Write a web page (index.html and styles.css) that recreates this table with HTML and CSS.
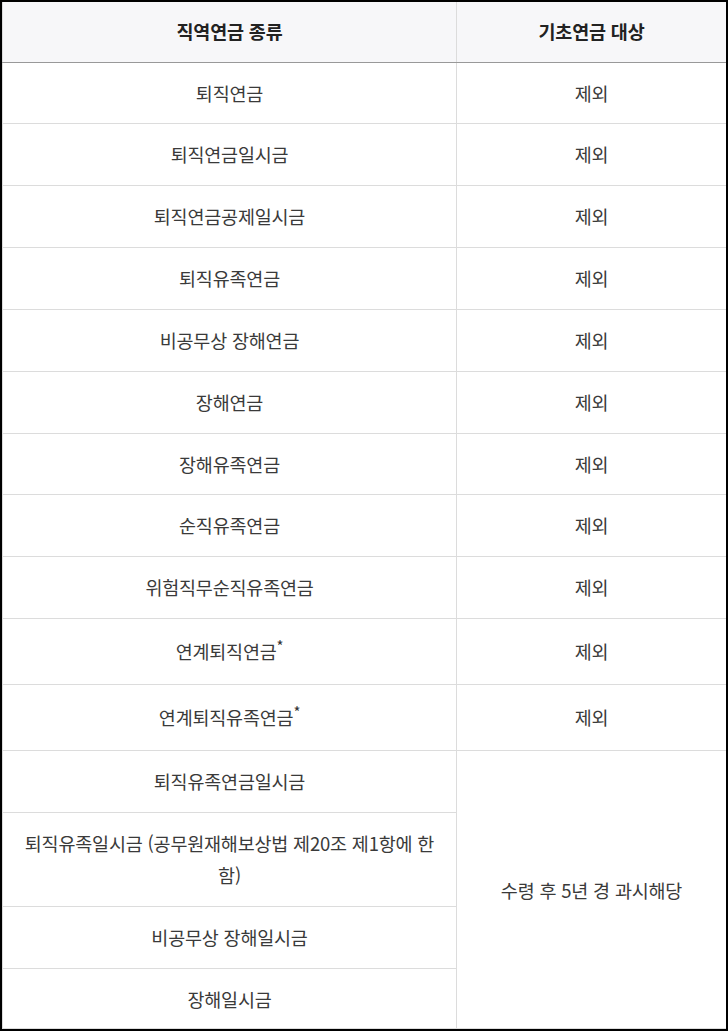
FILE: index.html
```html
<!DOCTYPE html>
<html lang="ko">
<head>
<meta charset="utf-8">
<title>직역연금 종류</title>
<link rel="stylesheet" href="styles.css">
</head>
<body>
<div class="frame">
  <div class="viewport">
    <table class="pension">
      <colgroup>
        <col class="col-kind">
        <col class="col-target">
      </colgroup>
      <thead>
        <tr>
          <th>직역연금 종류</th>
          <th>기초연금 대상</th>
        </tr>
      </thead>
      <tbody>
        <tr><td>퇴직연금</td><td>제외</td></tr>
        <tr><td>퇴직연금일시금</td><td>제외</td></tr>
        <tr><td>퇴직연금공제일시금</td><td>제외</td></tr>
        <tr><td>퇴직유족연금</td><td>제외</td></tr>
        <tr><td>비공무상 장해연금</td><td>제외</td></tr>
        <tr><td>장해연금</td><td>제외</td></tr>
        <tr><td>장해유족연금</td><td>제외</td></tr>
        <tr><td>순직유족연금</td><td>제외</td></tr>
        <tr><td>위험직무순직유족연금</td><td>제외</td></tr>
        <tr class="noted"><td>연계퇴직연금<sup class="mark">*</sup></td><td>제외</td></tr>
        <tr class="noted"><td>연계퇴직유족연금<sup class="mark">*</sup></td><td>제외</td></tr>
        <tr><td>퇴직유족연금일시금</td><td rowspan="4">수령 후 5년 경 과시해당</td></tr>
        <tr><td>퇴직유족일시금 (공무원재해보상법 제20조 제1항에 한함)</td></tr>
        <tr><td>비공무상 장해일시금</td></tr>
        <tr><td>장해일시금</td></tr>
      </tbody>
    </table>
  </div>
</div>
</body>
</html>
```

FILE: styles.css
```css
html, body {
  margin: 0;
  padding: 0;
  background: #fff;
}

.frame {
  box-sizing: border-box;
  width: 728px;
  height: 1031px;
  border: 2px solid #000;
  overflow: hidden;
}

.viewport {
  box-sizing: border-box;
  height: 100%;
  overflow: hidden;
  border-bottom: 1px solid #dcdcdc;
}

.pension {
  width: 724px;
  table-layout: fixed;
  border-collapse: collapse;
  font-family: "Noto Sans CJK KR", "Noto Sans", sans-serif;
  font-size: 18.5px;
  letter-spacing: -0.2px;
  color: #3a3a3a;
}

.col-kind { width: 454px; }
.col-target { width: 270px; }

.pension th {
  background: #f7f7f9;
  color: #222;
  font-weight: 700;
  padding: 14px 14px;
  line-height: 31.5px;
  text-align: center;
  border-left: 1px solid #dcdcdc;
  border-right: 1px solid #dcdcdc;
  border-bottom: 1px solid #999;
}

.pension td {
  padding: 14px 14px;
  line-height: 32.85px;
  text-align: center;
  vertical-align: middle;
  border: 1px solid #dcdcdc;
}

.pension .noted td {
  padding-top: 16px;
  padding-bottom: 16px;
}

.mark {
  font-size: 15px;
  line-height: 0;
  vertical-align: 7px;
  color: #333;
}
```
